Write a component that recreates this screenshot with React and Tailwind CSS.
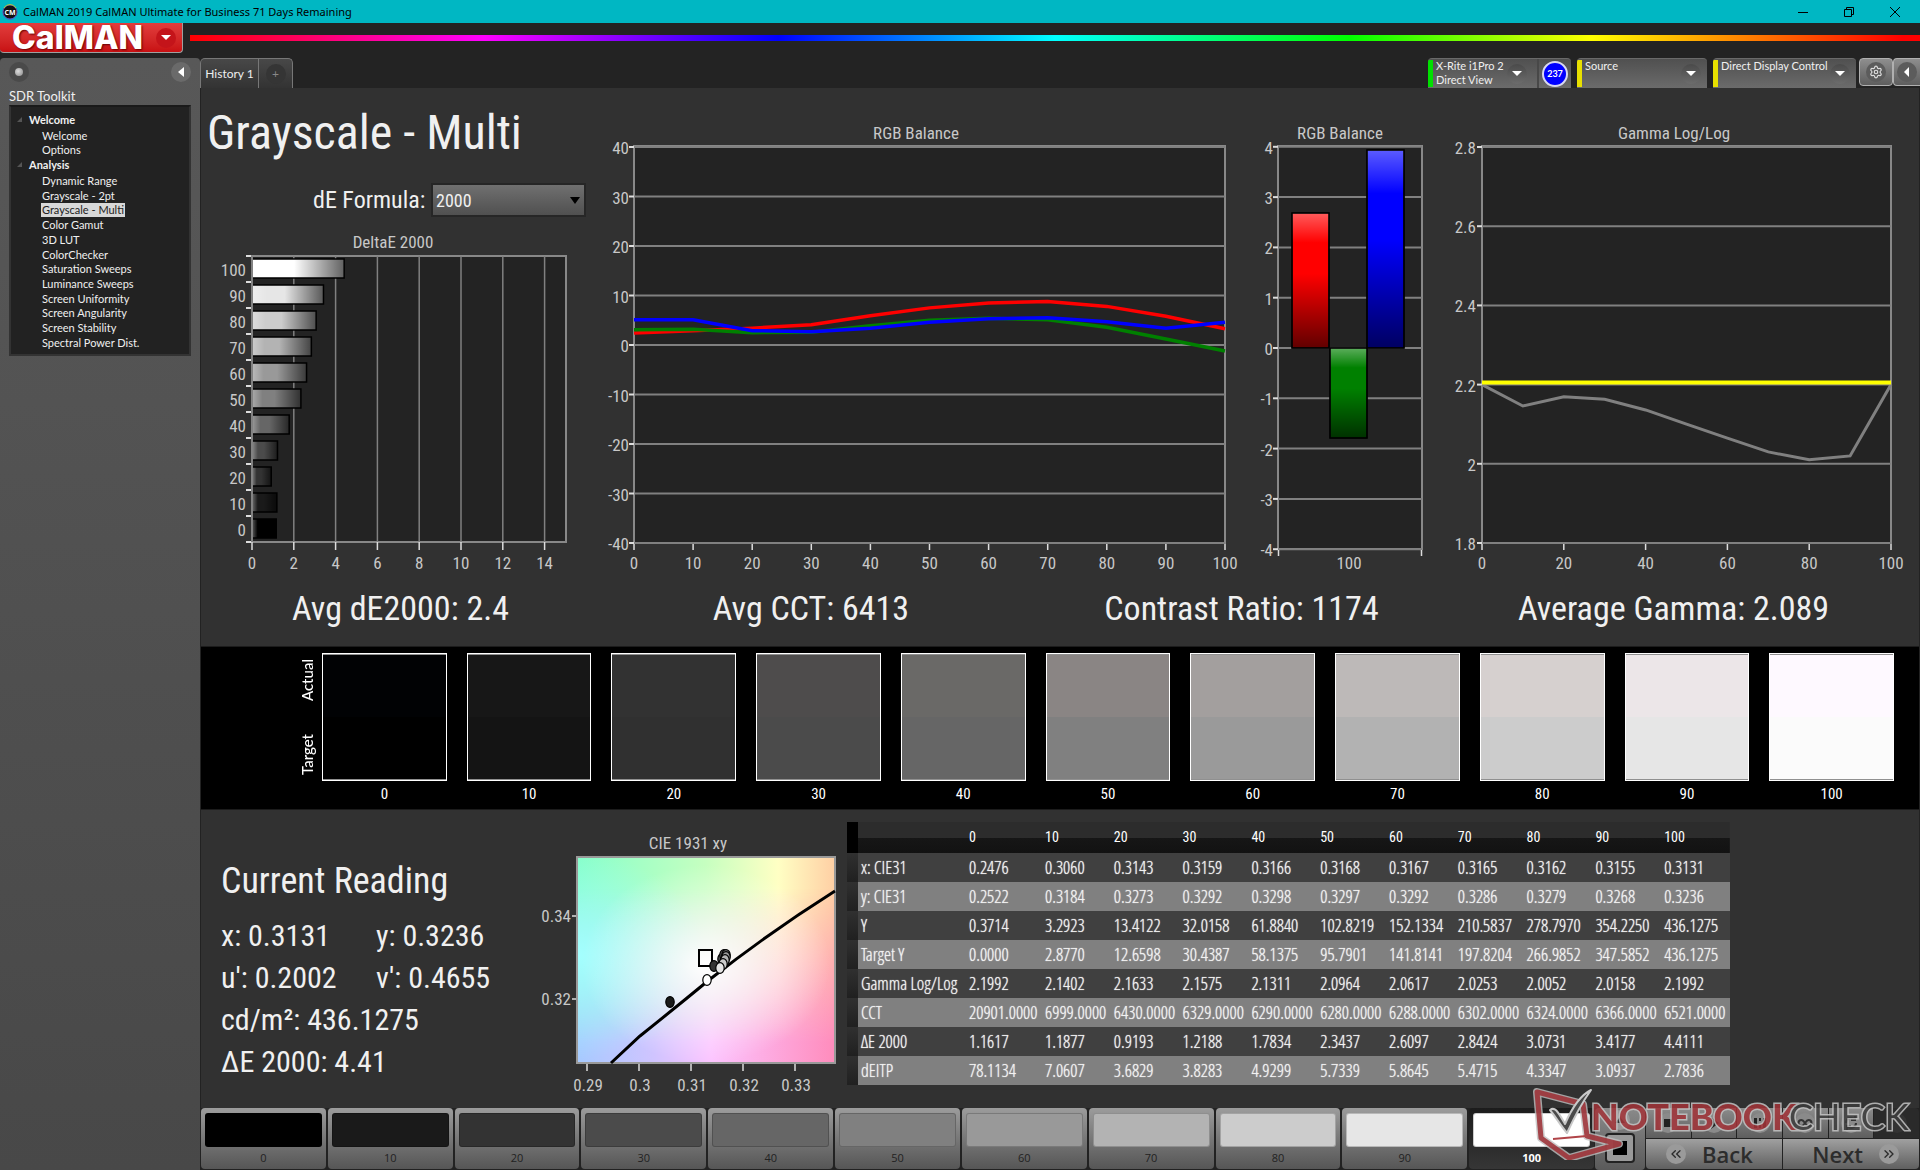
import { Settings, ChevronsLeft, ChevronsRight } from 'lucide-react';

const LEVELS = [0, 10, 20, 30, 40, 50, 60, 70, 80, 90, 100];
const GRAYS = ['#000000', '#1a1a1a', '#333333', '#4b4b4b', '#666666', '#808080', '#999999', '#b3b3b3', '#cccccc', '#e6e6e6', '#ffffff'];

const ANALYSIS = [
  'Dynamic Range', 'Grayscale - 2pt', 'Grayscale - Multi', 'Color Gamut', '3D LUT', 'ColorChecker',
  'Saturation Sweeps', 'Luminance Sweeps', 'Screen Uniformity', 'Screen Angularity', 'Screen Stability', 'Spectral Power Dist.',
];

const SWATCHES = [
  ['#010204', '#000000'], ['#171717', '#141414'], ['#323232', '#303030'], ['#4e4c4c', '#4b4b4b'],
  ['#6a6967', '#666666'], ['#8a8584', '#808080'], ['#a39f9e', '#9a9a9a'], ['#bdb9b8', '#b2b2b2'],
  ['#d6d0cf', '#cccccc'], ['#ece6e8', '#e6e6e6'], ['#fef9ff', '#fbfbfb'],
];

const DELTA_E = [1.16, 1.19, 0.92, 1.22, 1.78, 2.34, 2.61, 2.84, 3.07, 3.42, 4.41];
const RED = [2.4, 2.9, 3.4, 4.1, 5.9, 7.5, 8.5, 8.8, 7.8, 5.8, 3.3];
const GREEN = [3.1, 3.2, 2.5, 2.6, 3.9, 5.0, 5.4, 5.1, 3.6, 1.2, -1.2];
const BLUE = [5.1, 5.1, 2.9, 2.7, 3.4, 4.6, 5.3, 5.5, 4.7, 3.4, 4.6];
const GAMMA = [2.2, 2.146, 2.169, 2.163, 2.136, 2.1, 2.065, 2.03, 2.01, 2.02, 2.2];

const ROWS = [
  ['x: CIE31', '0.2476', '0.3060', '0.3143', '0.3159', '0.3166', '0.3168', '0.3167', '0.3165', '0.3162', '0.3155', '0.3131'],
  ['y: CIE31', '0.2522', '0.3184', '0.3273', '0.3292', '0.3298', '0.3297', '0.3292', '0.3286', '0.3279', '0.3268', '0.3236'],
  ['Y', '0.3714', '3.2923', '13.4122', '32.0158', '61.8840', '102.8219', '152.1334', '210.5837', '278.7970', '354.2250', '436.1275'],
  ['Target Y', '0.0000', '2.8770', '12.6598', '30.4387', '58.1375', '95.7901', '141.8141', '197.8204', '266.9852', '347.5852', '436.1275'],
  ['Gamma Log/Log', '2.1992', '2.1402', '2.1633', '2.1575', '2.1311', '2.0964', '2.0617', '2.0253', '2.0052', '2.0158', '2.1992'],
  ['CCT', '20901.0000', '6999.0000', '6430.0000', '6329.0000', '6290.0000', '6280.0000', '6288.0000', '6302.0000', '6324.0000', '6366.0000', '6521.0000'],
  ['ΔE 2000', '1.1617', '1.1877', '0.9193', '1.2188', '1.7834', '2.3437', '2.6097', '2.8424', '3.0731', '3.4177', '4.4111'],
  ['dEITP', '78.1134', '7.0607', '3.6829', '3.8283', '4.9299', '5.7339', '5.8645', '5.4715', '4.3347', '3.0937', '2.7836'],
];

const points = (values, x, y) => values.map((v, i) => `${x(i * 10)},${y(v)}`).join(' ');

const TitleBar = () => (
  <header className="h-[23px] bg-[#00b7c3] flex items-center justify-between pl-[2px] pr-[2px] text-black font-['Noto_Sans',sans-serif]">
    <div className="flex items-center gap-[5px]">
      <svg width="16" height="16" viewBox="0 0 16 16" aria-hidden="true">
        <circle cx="8" cy="8" r="7" fill="#111" stroke="#6a3fb0" strokeWidth="1" />
        <path d="M2 4a7 7 0 0 1 12 0" fill="none" stroke="#b7d433" strokeWidth="1" />
        <path d="M2 12a7 7 0 0 0 12 0" fill="none" stroke="#2f7ad6" strokeWidth="1" />
        <text x="8" y="11" textAnchor="middle" fontSize="7" fontWeight="700" fill="#fff">CM</text>
      </svg>
      <h1 className="text-[11px] leading-4">CalMAN 2019 CalMAN Ultimate for Business 71 Days Remaining</h1>
    </div>
    <div className="flex">
      <button aria-label="Minimize" className="w-[46px] h-[20px] grid place-items-center">
        <svg width="10" height="10"><path d="M0 5.5h10" stroke="#000" /></svg>
      </button>
      <button aria-label="Restore" className="w-[46px] h-[20px] grid place-items-center">
        <svg width="10" height="10" fill="none" stroke="#000"><path d="M.5 2.500h7v7h-7zM2.500 2.500v-2h7v7h-2" /></svg>
      </button>
      <button aria-label="Close" className="w-[46px] h-[20px] grid place-items-center">
        <svg width="10" height="10" stroke="#000"><path d="M0 0l10 10M10 0L0 10" /></svg>
      </button>
    </div>
  </header>
);

const RoundArrow = ({ className = '' }) => (
  <span className={`size-5 rounded-full bg-linear-to-b from-[#4a4a4a] to-[#6c6c6c] grid place-items-center shrink-0 ${className}`}>
    <svg width="10" height="6" fill="#fff"><path d="M0 0h10L5 5z" /></svg>
  </span>
);

const DeviceButton = ({ color, label, className, children }) => (
  <div className={`flex h-[30px] rounded-t-[4px] border-t border-[#6a6a6a] bg-linear-to-b from-[#505050] to-[#6b6b6b] overflow-hidden ${className}`}>
    <span className={`w-[5px] my-px ${color}`} />
    <button className="flex-1 flex items-start justify-between text-left pl-[3px] pr-[6px] whitespace-pre-line">
      <span className="text-[11px] leading-[14px] text-[#f0f0f0]">{label}</span>
      <RoundArrow className="mt-[5px]" />
    </button>
    {children}
  </div>
);

const TopBar = () => (
  <div className="flex items-start h-[35px]">
    <button className="w-[183px] h-[30px] rounded-b-[4px] border-b border-r border-[#a0a0a0] bg-linear-to-b from-[#e23c3c] to-[#c80f12] flex items-center justify-between pl-3 pr-[6px]">
      <span className="text-white text-[32px] leading-7 font-extrabold font-['Inter',sans-serif] [text-shadow:1px_1px_2px_#600]">CalMAN</span>
      <span className="size-5 rounded-full bg-[#c4141a] grid place-items-center">
        <svg width="10" height="6" fill="#fff"><path d="M0 0h10L5 5z" /></svg>
      </span>
    </button>
    <div className="flex-1 ml-[7px] mt-3 h-[6px] bg-[linear-gradient(90deg,#f00_0%,#f0f_17%,#00f_34%,#0ff_50%,#0f0_67%,#ff0_81%,#f00_99%)]" />
  </div>
);

const Tabs = () => (
  <div className="flex justify-between h-[30px]">
    <div className="flex rounded-t-[5px] border-t border-x border-[#777] bg-linear-to-b from-[#484848] to-[#333] text-[#eee]">
      <button className="w-[58px] border-r border-[#777] text-xs">History 1</button>
      <button className="w-[33px] grid place-items-center" aria-label="Add history">
        <span className="size-5 rounded-full bg-[#353535] text-[#888] text-xs leading-5">+</span>
      </button>
    </div>
    <div className="flex">
      <DeviceButton color="bg-[#00e000]" label={'X-Rite i1Pro 2\nDirect View'} className="w-[143px] mr-[6px] [&>button]:pr-[10px]">
        <span className="w-[34px] border-l-2 border-[#484848] grid place-items-center">
          <span className="size-[26px] rounded-full bg-[#0000ff] border-2 border-[#d8d8f0] text-white text-[9px] leading-[22px] text-center font-bold">237</span>
        </span>
      </DeviceButton>
      <DeviceButton color="bg-[#e8e000]" label="Source" className="w-[130px] mr-[6px]" />
      <DeviceButton color="bg-[#e8e000]" label="Direct Display Control" className="w-[143px] mr-[3px]" />
      <button aria-label="Settings" className="w-[34px] h-[28px] rounded-[4px] border border-[#b0b0b0] bg-linear-to-b from-[#8e8e8e] to-[#5e5e5e] grid place-items-center">
        <span className="size-5 rounded-full bg-[#5c5c5c] grid place-items-center"><Settings size={14} color="#ddd" /></span>
      </button>
      <button aria-label="Collapse" className="w-[27px] h-[28px] rounded-l-[4px] border border-r-0 border-[#b0b0b0] bg-linear-to-b from-[#8e8e8e] to-[#5e5e5e] grid place-items-center">
        <span className="size-5 rounded-full bg-[#5c5c5c] grid place-items-center">
          <svg width="6" height="10" fill="#fff"><path d="M5 0v10L0 5z" /></svg>
        </span>
      </button>
    </div>
  </div>
);

const Caret = () => (
  <svg width="6" height="6" fill="#555" aria-hidden="true"><path d="M5 0v5H0z" /></svg>
);

const Sidebar = () => (
  <aside className="w-[200px] shrink-0 rounded-t-[4px] bg-linear-to-b from-[#585858] to-[#484848] px-[9px] pt-1 text-[#f0f0f0]">
    <div className="flex justify-between">
      <button aria-label="Record" className="size-5 rounded-full bg-[#4a4a4a] grid place-items-center">
        <span className="size-2 rounded-full bg-[radial-gradient(circle_at_40%_40%,#ddd,#888)]" />
      </button>
      <button aria-label="Hide panel" className="size-5 rounded-full bg-[#6a6a6a] grid place-items-center">
        <svg width="6" height="10" fill="#fff"><path d="M6 0v10L0 5z" /></svg>
      </button>
    </div>
    <h2 className="mt-[6px] text-[13px] leading-4">SDR Toolkit</h2>
    <nav className="mt-[1px] h-[251px] border-2 border-t-[#1a1a1a] border-[#333] bg-[#222] pt-[5px] pl-[6px] text-[11px]">
      <div className="flex items-center gap-[6px] leading-4 font-bold"><Caret />Welcome</div>
      <ul className="pl-[25px] flex flex-col">
        <li><a href="#welcome" className="block leading-[15px]">Welcome</a></li>
        <li><a href="#options" className="block leading-[14px]">Options</a></li>
      </ul>
      <div className="flex items-center gap-[6px] leading-4 font-bold"><Caret />Analysis</div>
      <ul className="pl-[24px] pt-px h-[177px] flex flex-col justify-between items-start">
        {ANALYSIS.map(item => (
          <li key={item}>
            <a href="#analysis" className={`block px-px leading-[14px] ${item === 'Grayscale - Multi' ? 'bg-[#d8d8d8] text-[#222]' : ''}`}>{item}</a>
          </li>
        ))}
      </ul>
    </nav>
  </aside>
);

const DeltaEChart = () => {
  const x = v => 52 + v * 20.9;
  return (
    <svg viewBox="1 0 399 346" className="w-full block text-[17px]" role="img" aria-label="DeltaE 2000">
      <defs>
        <linearGradient id="shade">
          <stop offset="0" stopColor="#fff" stopOpacity=".3" />
          <stop offset=".2" stopColor="#fff" stopOpacity="0" />
          <stop offset=".45" stopColor="#000" stopOpacity="0" />
          <stop offset="1" stopColor="#000" stopOpacity=".62" />
        </linearGradient>
      </defs>
      <text x="193" y="19" textAnchor="middle" fill="#c8c8c8">DeltaE 2000</text>
      <rect x="52" y="27" width="314" height="286" fill="#232323" stroke="#888" strokeWidth="2" />
      {[0, 2, 4, 6, 8, 10, 12, 14].map(v => (
        <g key={v}>
          <path d={`M${x(v)} 27V313`} stroke="#808080" strokeWidth="1.5" />
          <path d={`M${x(v)} 313v8`} stroke="#ddd" strokeWidth="1.5" />
          <text x={x(v)} y="340" textAnchor="middle" fill="#c8c8c8">{v}</text>
        </g>
      ))}
      {[...Array(12).keys()].map(i => <path key={i} d={`M46 ${27 + i * 26}h5`} stroke="#ddd" strokeWidth="2" />)}
      {DELTA_E.map((v, i) => {
        const top = 30 + (10 - i) * 26;
        return (
          <g key={i}>
            <rect x="53" y={top} width={v * 20.9 - 1} height="19" fill={GRAYS[i]} />
            <rect x="53" y={top} width={v * 20.9 - 1} height="19" fill="url(#shade)" />
            <path d={`M53 ${top}H${x(v)}v19H53`} fill="none" stroke="#000" strokeWidth="1.5" />
            <text x="46" y={top + 17} textAnchor="end" fill="#c8c8c8">{i * 10}</text>
          </g>
        );
      })}
    </svg>
  );
};

const BalanceChart = () => {
  const x = v => 34 + v * 5.91;
  const y = v => 220 - v * 4.95;
  return (
    <svg viewBox="0 -10 645 471" className="w-full block text-[17px]" role="img" aria-label="RGB Balance">
      <text x="316" y="14" textAnchor="middle" fill="#c8c8c8">RGB Balance</text>
      <rect x="34" y="21" width="591" height="397" fill="#232323" stroke="#888" strokeWidth="2" />
      {[40, 30, 20, 10, 0, -10, -20, -30, -40].map(v => (
        <g key={v}>
          <path d={`M34 ${y(v)}H625`} stroke="#808080" strokeWidth="2" />
          <path d={`M29 ${y(v)}h5`} stroke="#ddd" strokeWidth="2" />
          <text x="29" y={y(v) + 7} textAnchor="end" fill="#c8c8c8">{v}</text>
        </g>
      ))}
      {LEVELS.map(v => (
        <g key={v}>
          <path d={`M${x(v)} 419v6`} stroke="#ddd" strokeWidth="1.5" />
          <text x={x(v)} y="444" textAnchor="middle" fill="#c8c8c8">{v}</text>
        </g>
      ))}
      <g fill="none" strokeWidth="3.5">
        <polyline points={points(RED, x, y)} stroke="#f00" />
        <polyline points={points(GREEN, x, y)} stroke="#008000" />
        <polyline points={points(BLUE, x, y)} stroke="#00f" />
      </g>
    </svg>
  );
};

const BarsChart = () => {
  const y = v => 223 - v * 50.3;
  return (
    <svg viewBox="0 -10 195 471" className="w-full block text-[17px]" role="img" aria-label="RGB Balance at 100">
      <defs>
        <linearGradient id="gloss" x2="0" y2="1">
          <stop offset="0" stopColor="#fff" stopOpacity=".36" />
          <stop offset=".22" stopColor="#fff" stopOpacity="0" />
          <stop offset=".45" stopColor="#000" stopOpacity="0" />
          <stop offset="1" stopColor="#000" stopOpacity=".62" />
        </linearGradient>
      </defs>
      <text x="95" y="14" textAnchor="middle" fill="#c8c8c8">RGB Balance</text>
      <rect x="33" y="21" width="144" height="403" fill="#232323" stroke="#888" strokeWidth="2" />
      {[4, 3, 2, 1, 0, -1, -2, -3, -4].map(v => (
        <g key={v}>
          <path d={`M33 ${y(v)}H177`} stroke="#808080" strokeWidth="2" />
          <path d={`M28 ${y(v)}h5`} stroke="#ddd" strokeWidth="2" />
          <text x="28" y={y(v) + 7} textAnchor="end" fill="#c8c8c8">{v}</text>
        </g>
      ))}
      <path d="M33.500 425v6M176.500 425v6" stroke="#ddd" strokeWidth="1.5" />
      <text x="104" y="444" textAnchor="middle" fill="#c8c8c8">100</text>
      {[[47, 88, 135, '#f00'], [85, 223, 90, '#008000'], [122, 25, 198, '#00f']].map(([bx, by, h, c]) => (
        <g key={c} stroke="#000">
          <rect x={bx} y={by} width="37" height={h} fill={c} />
          <rect x={bx} y={by} width="37" height={h} fill="url(#gloss)" strokeWidth="1.5" />
        </g>
      ))}
    </svg>
  );
};

const GammaChart = () => {
  const x = v => 42 + v * 4.09;
  const y = v => 418 - (v - 1.8) * 396;
  return (
    <svg viewBox="0 -10 479 471" className="w-full block text-[17px]" role="img" aria-label="Gamma Log/Log">
      <text x="234" y="14" textAnchor="middle" fill="#c8c8c8">Gamma Log/Log</text>
      <rect x="42" y="21" width="409" height="397" fill="#232323" stroke="#888" strokeWidth="2" />
      {[2.8, 2.6, 2.4, 2.2, 2, 1.8].map(v => (
        <g key={v}>
          <path d={`M42 ${y(v)}H451`} stroke="#808080" strokeWidth="2" />
          <path d={`M37 ${y(v)}h5`} stroke="#ddd" strokeWidth="2" />
          <text x="36" y={y(v) + 7} textAnchor="end" fill="#c8c8c8">{v}</text>
        </g>
      ))}
      {[0, 20, 40, 60, 80, 100].map(v => (
        <g key={v}>
          <path d={`M${x(v)} 419v6`} stroke="#ddd" strokeWidth="1.5" />
          <text x={x(v)} y="444" textAnchor="middle" fill="#c8c8c8">{v}</text>
        </g>
      ))}
      <polyline points={points(GAMMA, x, y)} fill="none" stroke="#808080" strokeWidth="3" />
      <path d="M42 257.500H451" stroke="#ff0" strokeWidth="4" />
    </svg>
  );
};

const CieChart = () => (
  <svg viewBox="0 0 300 272" className="w-[300px] shrink-0 block text-[17px]" role="img" aria-label="CIE 1931 xy">
    <defs>
      <linearGradient id="cieTop">
        <stop offset="0" stopColor="#86ffca" />
        <stop offset=".5" stopColor="#c6ffc0" />
        <stop offset=".78" stopColor="#ffffc4" />
        <stop offset="1" stopColor="#ffcfa4" />
      </linearGradient>
      <linearGradient id="cieBottom">
        <stop offset="0" stopColor="#a6caff" />
        <stop offset=".3" stopColor="#d0c4ff" />
        <stop offset=".52" stopColor="#fcc4ff" />
        <stop offset="1" stopColor="#ff8cbc" />
      </linearGradient>
      <linearGradient id="cieFade" x2="0" y2="1">
        <stop offset=".15" stopColor="#000" />
        <stop offset=".9" stopColor="#fff" />
      </linearGradient>
      <mask id="cieMask"><rect x="40" y="32" width="258" height="206" fill="url(#cieFade)" /></mask>
      <radialGradient id="cieCyan" cx="0" cy=".48" r=".5">
        <stop offset="0" stopColor="#a4ffff" />
        <stop offset="1" stopColor="#a4ffff" stopOpacity="0" />
      </radialGradient>
      <radialGradient id="cieWhite" cx=".5" cy=".52" r=".48">
        <stop offset="0" stopColor="#fff" />
        <stop offset=".2" stopColor="#fff" stopOpacity=".75" />
        <stop offset="1" stopColor="#fff" stopOpacity="0" />
      </radialGradient>
    </defs>
    <text x="151" y="24" textAnchor="middle" fill="#c8c8c8">CIE 1931 xy</text>
    <rect x="40" y="32" width="258" height="206" fill="url(#cieTop)" />
    <rect x="40" y="32" width="258" height="206" fill="url(#cieBottom)" mask="url(#cieMask)" />
    <rect x="40" y="32" width="258" height="206" fill="url(#cieCyan)" />
    <rect x="40" y="32" width="258" height="206" fill="url(#cieWhite)" />
    <rect x="40" y="32" width="258" height="206" fill="none" stroke="#999" strokeWidth="2" />
    <path d="M74 238Q88 225 103 211Q138 183 172 155Q233 107 298 66" fill="none" stroke="#000" strokeWidth="3" />
    <rect x="162" y="125" width="13" height="16" fill="none" stroke="#000" strokeWidth="2" />
    <g stroke="#000" strokeWidth="1.2">
      {[[133, 177, '#1a1a1a'], [177, 141, '#333333'], [185, 134, '#4b4b4b'], [187, 130, '#666666'], [189, 130, '#777777'], [189, 132, '#999999'], [188, 135, '#b3b3b3'], [186, 139, '#cccccc'], [183, 143, '#e6e6e6'], [170, 155, '#ffffff']].map(([cx, cy, c]) => (
        <ellipse key={c} cx={cx} cy={cy} rx="4.200" ry="5.400" fill={c} />
      ))}
    </g>
    {[['0.34', 91], ['0.32', 174]].map(([t, ty]) => (
      <g key={t}>
        <path d={`M35 ${ty}h4`} stroke="#ddd" strokeWidth="1.5" />
        <text x="34" y={ty + 6} textAnchor="end" fill="#c8c8c8">{t}</text>
      </g>
    ))}
    {['0.29', '0.3', '0.31', '0.32', '0.33'].map((t, i) => (
      <g key={t}>
        <path d={`M${50 + i * 52} 239v7`} stroke="#ddd" strokeWidth="1.5" />
        <text x={51 + i * 52} y="266" textAnchor="middle" fill="#c8c8c8">{t}</text>
      </g>
    ))}
  </svg>
);

const SwatchBand = () => (
  <section className="h-[164px] bg-black border-y border-[#1c1c1c] pt-[6px] pr-[25px] flex">
    <div className="w-[121px] h-[128px] flex flex-col items-end justify-between pr-[6px] py-[6px] text-white text-[15px] leading-[18px] font-medium font-['Lato',sans-serif]">
      <span className="[writing-mode:vertical-rl] rotate-180">Actual</span>
      <span className="[writing-mode:vertical-rl] rotate-180">Target</span>
    </div>
    <div className="flex-1 grid grid-cols-11 gap-x-5">
      {SWATCHES.map(([actual, target], i) => (
        <div key={i} className="text-center text-white text-[15px] leading-[26px]">
          <div className="h-[128px] border border-white bg-[#909090] py-px flex flex-col">
            <span className="flex-1" style={{ background: actual }} />
            <span className="flex-1" style={{ background: target }} />
          </div>
          {LEVELS[i]}
        </div>
      ))}
    </div>
  </section>
);

const Reading = () => (
  <div className="w-[336px] shrink-0 pl-[20px] pt-[49px] text-[#f0f0f0] text-[30px] leading-[42px]">
    <h2 className="text-[36px] leading-[44px] mb-[12px]">Current Reading</h2>
    <div className="grid grid-cols-[155px_1fr]">
      <span>x: 0.3131</span>
      <span>y: 0.3236</span>
      <span>u': 0.2002</span>
      <span>v': 0.4655</span>
    </div>
    <div>cd/m²: 436.1275</div>
    <div>ΔE 2000: 4.41</div>
  </div>
);

const DataTable = () => (
  <table className="w-[883px] table-fixed border-collapse text-left text-[#f2f2f2] text-[18px] leading-[29px] font-['Open_Sans_Condensed_Light','Roboto_Condensed',sans-serif] [text-shadow:0_0_1px_currentColor]">
    <colgroup>
      <col className="w-[11px]" />
      <col className="w-[108px]" />
      <col className="w-[76px]" />
    </colgroup>
    <thead>
      <tr className="h-[31px] bg-[linear-gradient(#2c2c2c_50%,#161616_52%,#121212)]">
        <td className="bg-black" />
        <td />
        {LEVELS.map(v => <th key={v} className="p-0 pl-[3px] font-normal text-white text-[14px] font-['Roboto_Condensed',sans-serif] [text-shadow:none]">{v}</th>)}
      </tr>
    </thead>
    <tbody>
      {ROWS.map(([label, ...cells], r) => (
        <tr key={label} className={`h-[29px] ${r % 2 ? 'bg-[#808080]' : 'bg-[#404040]'}`}>
          <td className="p-0 bg-linear-to-b from-[#303030] to-[#202020]" />
          <th className="p-0 pl-[3px] font-normal whitespace-nowrap">{label}</th>
          {cells.map((c, i) => <td key={i} className="p-0 pl-[3px] whitespace-nowrap">{c}</td>)}
        </tr>
      ))}
    </tbody>
  </table>
);

const MEDIA = [
  ['Stop', <rect x="6" y="6" width="8" height="8" />],
  ['Play', <path d="M7 4l8 6-8 6z" />],
  ['Step', <path d="M4 5h3v10H4zM13 5h3v10h-3zM9 5h2v3H9zM9 12h2v3H9z" />],
  ['Loop', <path d="M6.500 7a3 3 0 1 0 0 6c3 0 4-6 7-6a3 3 0 1 1 0 6c-3 0-4-6-7-6z" fill="none" stroke="#333" strokeWidth="2" />],
  ['Refresh', <path d="M5 10a5 5 0 0 1 9-3M15 10a5 5 0 0 1-9 3M14 3v4h-4M6 17v-4h4" fill="none" stroke="#333" strokeWidth="2" />],
];

const Watermark = () => (
  <svg className="absolute right-2 bottom-[10px] w-[380px] h-[76px] pointer-events-none" viewBox="0 0 380 76" aria-hidden="true">
    <g strokeLinejoin="round" fill="none">
      <path d="M6 8L52 20L56 52L88 60L38 74L10 54Z" stroke="#c0c0c0" strokeWidth="8" opacity=".8" />
      <path d="M6 8L52 20L56 52L88 60L38 74L10 54Z" stroke="#9c2d32" strokeWidth="5" opacity=".85" />
      <path d="M19 26c5-4 8 2 15 14C40 26 48 12 60 6C50 20 42 36 36 49C30 42 24 32 19 26z" fill="#4a4a4a" stroke="#c8c8c8" strokeWidth="2" />
      <path d="M22 55L56 52" stroke="#b04448" strokeWidth="2" />
    </g>
    <g className="font-['Lato',sans-serif] text-[36px]" stroke="#c4c4c4" strokeWidth="3" paintOrder="stroke" fontWeight="900" opacity=".85">
      <text x="60" y="46" fill="#a23338">NOTEBOOK</text>
      <text x="258" y="46" fill="#3c3c3c" fontWeight="400">CHECK</text>
    </g>
  </svg>
);

const BottomBar = () => (
  <footer className="relative h-[62px] flex bg-[#222] font-['Open_Sans',sans-serif]">
    <div className="flex-1 grid grid-cols-11 gap-x-[2px]">
      {LEVELS.map((v, i) => (
        <button
          key={v}
          className={`h-[61px] rounded-[4px] px-1 pt-[5px] flex flex-col items-stretch text-[11px] leading-[22px] ${v === 100 ? 'bg-linear-to-b from-[#1c1c1c] to-[#363636] text-white font-bold' : 'bg-linear-to-b from-[#9c9c9c] to-[#565656] text-[#222]'}`}
        >
          <span className="h-[36px] rounded-[3px] border border-black/20" style={{ background: GRAYS[i] }} />
          {v}
        </button>
      ))}
    </div>
    <div className="w-[50px] mx-px rounded-[4px] bg-linear-to-b from-[#8a8a8a] to-[#5a5a5a] flex flex-col items-center justify-between pt-[2px] pb-[7px]">
      <button aria-label="Expand" className="size-5 rounded-full bg-[#9a9a9a] grid place-items-center">
        <svg width="10" height="6" fill="#333"><path d="M0 6h10L5 0z" /></svg>
      </button>
      <button aria-label="Pattern window" className="size-[30px] rounded-[4px] border-2 border-[#222] bg-[#999] grid place-items-center">
        <span className="size-[14px] bg-black" />
      </button>
    </div>
    <div className="w-[273px] flex flex-col gap-px">
      <div className="h-[30px] grid grid-cols-6 gap-px">
        {MEDIA.map(([name, icon]) => (
          <button key={name} aria-label={name} className="bg-linear-to-b from-[#8c8c8c] to-[#5e5e5e] grid place-items-center">
            <span className="size-5 rounded-full bg-[#8a8a8a] grid place-items-center">
              <svg width="20" height="20" viewBox="0 0 20 20" fill="#222">{icon}</svg>
            </span>
          </button>
        ))}
        <span className="rounded-tr-[4px] bg-[#2a2a2a] grid place-items-center"><span className="size-5 rounded-full bg-[#333]" /></span>
      </div>
      <div className="h-[30px] grid grid-cols-2 gap-px text-[22px] leading-[30px] font-semibold text-[#2c2c2c]">
        <button className="rounded-bl-[4px] bg-linear-to-b from-[#a0a0a0] to-[#606060] flex items-center gap-4 pl-5">
          <span className="size-5 rounded-full bg-[#9a9a9a] grid place-items-center"><ChevronsLeft size={16} /></span>
          Back
        </button>
        <button className="rounded-br-[4px] bg-linear-to-b from-[#a0a0a0] to-[#606060] flex items-center justify-end gap-4 pr-5">
          Next
          <span className="size-5 rounded-full bg-[#9a9a9a] grid place-items-center"><ChevronsRight size={16} /></span>
        </button>
      </div>
    </div>
    <Watermark />
  </footer>
);

const Workspace = () => (
  <main className="flex-1 border-x border-[#222] bg-[#313131] flex flex-col font-['Roboto_Condensed','Open_Sans',sans-serif]">
    {/* Charts */}
    <section className="grid grid-cols-[399fr_645fr_195fr_479fr]">
      <div>
        <h2 className="pl-[6px] pt-[10px] text-[48px] leading-[70px] text-[#f0f0f0]">Grayscale - Multi</h2>
        <div className="flex items-center gap-[7px] pt-[14px] pl-[112px]">
          <label htmlFor="formula" className="text-[24px] leading-[36px] text-[#f0f0f0] w-[111px] whitespace-nowrap">dE Formula:</label>
          <div className="relative">
            <select id="formula" className="appearance-none w-[155px] h-[34px] pl-[3px] border-2 border-[#262626] bg-linear-to-b from-[#707070] to-[#505050] text-[#f0f0f0] text-[18px]">
              <option>2000</option>
            </select>
            <svg className="absolute right-[6px] top-[14px] pointer-events-none" width="10" height="8"><path d="M0 0h10L5 7z" /></svg>
          </div>
        </div>
        <div className="pt-[11px]"><DeltaEChart /></div>
      </div>
      <div className="pt-[27px]"><BalanceChart /></div>
      <div className="pt-[27px]"><BarsChart /></div>
      <div className="pt-[27px]"><GammaChart /></div>
    </section>
    <section className="h-[60px] pr-[33px] grid grid-cols-[399fr_422fr_439fr_425fr] text-center text-[34px] leading-[44px] text-[#f0f0f0]">
      <p>Avg dE2000: 2.4</p>
      <p>Avg CCT: 6413</p>
      <p>Contrast Ratio: 1174</p>
      <p>Average Gamma: 2.089</p>
    </section>
    <SwatchBand />
    {/* Reading, chromaticity and the data */}
    <section className="flex-1 flex items-start">
      <Reading />
      <div className="pt-[15px]"><CieChart /></div>
      <div className="pt-[12px] ml-[10px]"><DataTable /></div>
    </section>
    <BottomBar />
  </main>
);

export default function App() {
  return (
    <div className="min-h-screen flex flex-col bg-[#232323] font-['Lato',sans-serif]">
      <TitleBar />
      <TopBar />
      <div className="flex-1 flex">
        <Sidebar />
        <div className="flex-1 flex flex-col min-w-0">
          <Tabs />
          <Workspace />
        </div>
      </div>
    </div>
  );
}
